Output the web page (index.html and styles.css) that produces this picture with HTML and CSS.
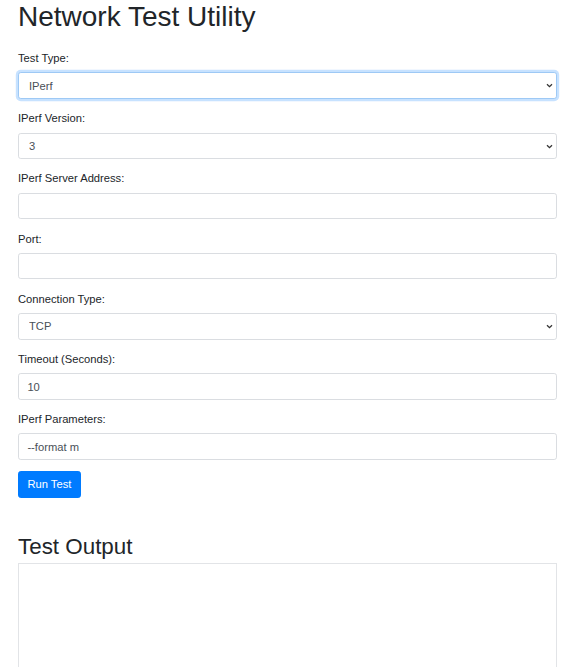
FILE: index.html
```html
<!DOCTYPE html>
<html lang="en">
<head>
<meta charset="utf-8">
<title>Network Test Utility</title>
<link rel="stylesheet" href="styles.css">
</head>
<body>
<div class="container">
  <h1 class="title">Network Test Utility</h1>
  <form class="test-form">
    <div class="group">
      <label class="label" for="testType">Test Type:</label>
      <div class="select-wrap">
        <select id="testType" class="control select focused"><option>IPerf</option></select>
        <svg class="chevron" width="7" height="5" viewBox="0 0 7 5"><path d="M1 1.2 L3.5 3.6 L6 1.2" fill="none" stroke="#333" stroke-width="1.3"/></svg>
      </div>
    </div>
    <div class="group">
      <label class="label" for="ver">IPerf Version:</label>
      <div class="select-wrap">
        <select id="ver" class="control select"><option>3</option></select>
        <svg class="chevron" width="7" height="5" viewBox="0 0 7 5"><path d="M1 1.2 L3.5 3.6 L6 1.2" fill="none" stroke="#333" stroke-width="1.3"/></svg>
      </div>
    </div>
    <div class="group">
      <label class="label" for="addr">IPerf Server Address:</label>
      <input id="addr" class="control" type="text" value="">
    </div>
    <div class="group">
      <label class="label" for="port">Port:</label>
      <input id="port" class="control" type="text" value="">
    </div>
    <div class="group">
      <label class="label" for="conn">Connection Type:</label>
      <div class="select-wrap">
        <select id="conn" class="control select"><option>TCP</option></select>
        <svg class="chevron" width="7" height="5" viewBox="0 0 7 5"><path d="M1 1.2 L3.5 3.6 L6 1.2" fill="none" stroke="#333" stroke-width="1.3"/></svg>
      </div>
    </div>
    <div class="group">
      <label class="label" for="timeout">Timeout (Seconds):</label>
      <input id="timeout" class="control" type="text" value="10">
    </div>
    <div class="group">
      <label class="label" for="params">IPerf Parameters:</label>
      <input id="params" class="control" type="text" value="--format m">
    </div>
    <button type="button" class="btn">Run Test</button>
  </form>
  <h2 class="subtitle">Test Output</h2>
  <div class="output"></div>
</div>
</body>
</html>
```
FILE: styles.css
```css
* { box-sizing: border-box; }
html, body {
  margin: 0;
  padding: 0;
  background: #fff;
}
body {
  font-family: "Liberation Sans", Arial, sans-serif;
  color: #212529;
  font-size: 11.2px;
  line-height: 16.8px;
}
.container {
  padding: 0 20px 0 18px;
}
.title {
  font-size: 28px;
  font-weight: 400;
  line-height: 33.6px;
  margin: 0 0 16.4px;
}
.test-form {
  margin: 0;
}
.group {
  margin-bottom: 11.2px;
}
.label {
  display: block;
  font-size: 11.2px;
  line-height: 16.8px;
  margin-bottom: 5.6px;
  color: #212529;
}
.control {
  display: block;
  width: 100%;
  height: 26.6px;
  margin: 0;
  padding: 0 8.4px;
  font-family: "Liberation Sans", Arial, sans-serif;
  font-size: 11.2px;
  color: #495057;
  background: #fff;
  border: 1px solid #dadde1;
  border-radius: 2.8px;
  outline: none;
}
.select-wrap {
  position: relative;
}
.select {
  appearance: none;
  -webkit-appearance: none;
  padding-left: 10px;
}
.focused {
  border-color: #9ec9f5;
  box-shadow: 0 0 0 2.2px rgba(0, 123, 255, 0.22);
}
.chevron {
  position: absolute;
  right: 4px;
  top: 11px;
}
.btn {
  display: block;
  height: 26.6px;
  padding: 0 8.4px;
  font-family: "Liberation Sans", Arial, sans-serif;
  font-size: 11.2px;
  color: #fff;
  background: #007bff;
  border: 1px solid #007bff;
  border-radius: 2.8px;
}
.subtitle {
  font-size: 22.4px;
  font-weight: 400;
  line-height: 26.9px;
  margin: 36px 0 2.4px;
}
.output {
  height: 220px;
  border: 1px solid #e2e4e7;
  background: #fff;
}
```
